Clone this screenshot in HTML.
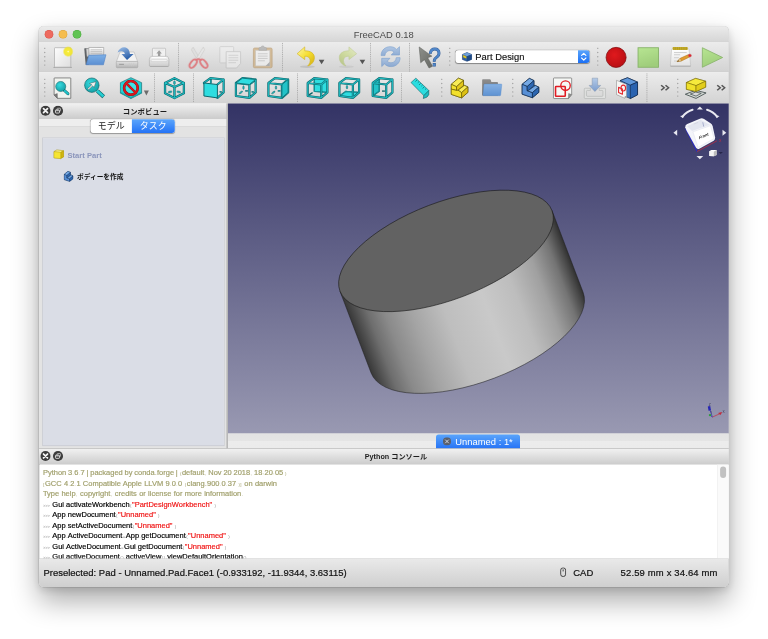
<!DOCTYPE html>
<html lang="ja"><head><meta charset="utf-8"><title>FreeCAD 0.18</title>
<style>
html,body{margin:0;padding:0;background:#fff;}
body{width:768px;height:639px;overflow:hidden;position:relative;font-family:"Liberation Sans","Noto Sans CJK JP",sans-serif;color:#222;}
#win{position:absolute;left:390px;top:265px;width:6895px;height:5605px;border-radius:45px;background:#e4e4e4;
 box-shadow:0 140px 280px rgba(0,0,0,.33),0 30px 80px rgba(0,0,0,.12),0 0 0 5px rgba(0,0,0,.17);}
#clip{position:absolute;left:0;top:0;width:100%;height:100%;border-radius:45px;overflow:hidden;}
.abs{position:absolute;}
#scaler{position:absolute;left:0;top:0;width:7680px;height:6390px;transform:scale(.1);transform-origin:0 0;will-change:transform;}
#zoomer{position:absolute;left:0;top:0;width:7680px;height:6390px;}
#ui{position:absolute;left:0;top:0;width:7680px;height:6390px;}
.ic{position:absolute;overflow:visible;}
#titlebar{left:390px;top:265px;width:6895px;height:155px;background:linear-gradient(#ebebeb,#d6d6d6);border-radius:45px 45px 0 0;border-bottom:5px solid #b4b4b4;box-sizing:border-box;}
#title{left:390px;top:285px;width:6895px;text-align:center;font-size:94px;color:#4a4a4a;line-height:120px;}
.tl{width:86px;height:86px;border-radius:50%;top:300px;}
.tbar{left:390px;width:6895px;background:linear-gradient(#ececec,#d3d3d3);box-sizing:border-box;}
.hsep{width:0;border-left:9px dotted #979797;}
.handle{width:10px;border-left:10px dotted #9a9a9a;}
.docktitle{background:linear-gradient(#f1f1f1,#cdcdcd);box-sizing:border-box;border-top:5px solid #b9b9b9;border-bottom:5px solid #a9a9a9;}
.dbtn{width:106px;height:106px;}
.con{font-size:75px;line-height:105px;white-space:nowrap;color:#000;-webkit-text-stroke:1.8px currentColor;word-spacing:2px}
.con div{height:105px;}
.con .c{color:#a1a06c;}
.con .s{color:#f01414;}
.con .p{font-size:44px;color:#8e8e8e;letter-spacing:4.5px;margin-left:4px;-webkit-text-stroke:0}
.con .pc{font-size:44px;color:#a1a06c;letter-spacing:4.5px;margin-left:4px;-webkit-text-stroke:0}
.con .pr{font-size:40px;color:#8e8e8e;letter-spacing:0;margin-right:24px;-webkit-text-stroke:0;word-spacing:0}

</style></head><body>
<div id="scaler"><div id="zoomer">
<div id="win"></div>
<div id="ui">
<!-- title bar -->
<div class="abs" id="titlebar"></div>
<div class="abs tl" style="left:447px;background:#ee6a5f;box-shadow:inset 0 0 0 5px #d5544a"></div>
<div class="abs tl" style="left:587px;background:#f5bd4f;box-shadow:inset 0 0 0 5px #d9a13b"></div>
<div class="abs tl" style="left:727px;background:#61c454;box-shadow:inset 0 0 0 5px #4da73f"></div>
<div class="abs" id="title">FreeCAD 0.18</div>

<!-- toolbar 1 -->
<div class="abs tbar" style="top:420px;height:298px;border-bottom:6px solid #b9b9b9"></div>
<div class="abs tbar" style="top:718px;height:314px;border-top:6px solid #f2f2f2"></div>
<svg class="abs" style="left:438px;top:475px;width:20px;height:190px" viewBox="0 0 2 19" fill="#9d9d9d"><circle cx="1" cy="0.8" r=".7"/><circle cx="1" cy="5.0" r=".7"/><circle cx="1" cy="9.2" r=".7"/><circle cx="1" cy="13.4" r=".7"/><circle cx="1" cy="17.6" r=".7"/></svg>
<div class="abs hsep" style="left:1780px;top:430px;height:285px"></div>
<div class="abs hsep" style="left:2820px;top:430px;height:285px"></div>
<div class="abs hsep" style="left:3700px;top:430px;height:285px"></div>
<div class="abs hsep" style="left:4090px;top:430px;height:285px"></div>
<svg class="abs" style="left:4488px;top:475px;width:20px;height:190px" viewBox="0 0 2 19" fill="#9d9d9d"><circle cx="1" cy="0.8" r=".7"/><circle cx="1" cy="5.0" r=".7"/><circle cx="1" cy="9.2" r=".7"/><circle cx="1" cy="13.4" r=".7"/><circle cx="1" cy="17.6" r=".7"/></svg>
<svg class="abs" style="left:5968px;top:475px;width:20px;height:190px" viewBox="0 0 2 19" fill="#9d9d9d"><circle cx="1" cy="0.8" r=".7"/><circle cx="1" cy="5.0" r=".7"/><circle cx="1" cy="9.2" r=".7"/><circle cx="1" cy="13.4" r=".7"/><circle cx="1" cy="17.6" r=".7"/></svg>
<svg class="ic" style="left:545px;top:476.5px;width:163px;height:194.5px" viewBox="3.4 2.2 16.6 19.6" preserveAspectRatio="none"><defs><linearGradient id="gnew" x1="0" y1="0" x2="1" y2="1"><stop offset="0" stop-color="#fdfdfd"/><stop offset="1" stop-color="#dedede"/></linearGradient>
<radialGradient id="gglow"><stop offset="0" stop-color="#fffbd0"/><stop offset=".22" stop-color="#f7ec3a"/><stop offset=".7" stop-color="#f1e52a" stop-opacity=".9"/><stop offset="1" stop-color="#f1e52a" stop-opacity="0"/></radialGradient></defs>
<path d="M2.4 22.1 H21" stroke="#8a8a8a" stroke-width=".9" opacity=".75"/>
<rect x="3.4" y="2.2" width="16.6" height="19.6" rx=".6" fill="url(#gnew)" stroke="#ababab" stroke-width=".7"/>
<circle cx="17.3" cy="6.1" r="5.6" fill="url(#gglow)"/></svg>
<svg class="ic" style="left:460px;top:420px;width:700px;height:320px" viewBox="0 0 768 351" preserveAspectRatio="xMidYMid meet"><defs><linearGradient id="gfold" x1="0" y1="0" x2="0" y2="1"><stop offset="0" stop-color="#7fb0e6"/><stop offset="1" stop-color="#5b8fd2"/></linearGradient>
<linearGradient id="gpap" x1="0" y1="0" x2="0" y2="1"><stop offset="0" stop-color="#ffffff"/><stop offset="1" stop-color="#c9c9c9"/></linearGradient></defs>
<path d="M420 75 Q420 68 428 68 L470 68 L470 250 L435 250 Z" fill="#5e6266"/>
<path d="M440 75 L600 62 L610 150 L450 160 Z" fill="#d6d6d6" stroke="#9a9a9a" stroke-width="5"/>
<path d="M470 60 H633 V150 H470 Z" fill="url(#gpap)" stroke="#8f8f8f" stroke-width="6"/>
<path d="M490 85 H615 M490 105 H615 M490 125 H615" stroke="#b3b3b3" stroke-width="7"/>
<path d="M470 146 L658 140 L630 250 L440 250 Z" fill="url(#gfold)" stroke="#4b7fc4" stroke-width="6" stroke-linejoin="round"/></svg>
<svg class="ic" style="left:1130px;top:430px;width:280px;height:280px" viewBox="0 0 639 639" preserveAspectRatio="xMidYMid meet"><defs><linearGradient id="gdrv" x1="0" y1="0" x2="0" y2="1"><stop offset="0" stop-color="#e2e2e2"/><stop offset="1" stop-color="#b2b2b2"/></linearGradient>
<linearGradient id="gsarr" x1="0" y1="0" x2=".6" y2="1"><stop offset="0" stop-color="#9fc0e8"/><stop offset="1" stop-color="#2258a4"/></linearGradient></defs>
<path d="M160 205 H480 L562 425 H78 Z" fill="#f2f2f2" stroke="#a9a9a9" stroke-width="11" stroke-linejoin="round"/>
<rect x="75" y="420" width="490" height="145" rx="22" fill="url(#gdrv)" stroke="#9c9c9c" stroke-width="11"/>
<path d="M140 487 H250" stroke="#9c9c9c" stroke-width="24"/><path d="M370 455 V530 M420 455 V530 M470 455 V530" stroke="#c9c9c9" stroke-width="14"/>
<path d="M105 215 C140 115 250 65 330 125 C368 155 382 200 385 250 L470 250 L320 388 L195 250 L270 250 C262 200 205 165 105 215 Z" fill="url(#gsarr)"/></svg>
<svg class="ic" style="left:1450px;top:430px;width:280px;height:280px" viewBox="0 0 639 639" preserveAspectRatio="xMidYMid meet"><defs><linearGradient id="gprn" x1="0" y1="0" x2="0" y2="1"><stop offset="0" stop-color="#f6f6f6"/><stop offset="1" stop-color="#cbcbcb"/></linearGradient></defs>
<rect x="170" y="120" width="300" height="205" rx="14" fill="#f1f1f1" stroke="#a9a9a9" stroke-width="12"/>
<path d="M215 160 H430" stroke="#d2d2d2" stroke-width="10"/>
<path d="M322 165 L385 240 H350 V295 H295 V240 H260 Z" fill="#9d9d9d"/>
<path d="M150 305 H495 Q520 305 530 330 L545 375 V510 Q545 535 520 535 H125 Q100 535 100 510 V375 L115 330 Q125 305 150 305 Z" fill="url(#gprn)" stroke="#a3a3a3" stroke-width="12" stroke-linejoin="round"/>
<path d="M170 330 H475" stroke="#ffffff" stroke-width="22" stroke-linecap="round" opacity=".9"/>
<rect x="140" y="385" width="365" height="38" rx="10" fill="#fbfbfb" stroke="#b5b5b5" stroke-width="8"/>
<path d="M112 540 H535" stroke="#9a9a9a" stroke-width="14" opacity=".8"/></svg>
<svg class="ic" style="left:1840px;top:430px;width:280px;height:280px" viewBox="0 0 639 639" preserveAspectRatio="xMidYMid meet"><g opacity=".8"><path d="M165 150 L210 95 L352 340 L300 372 Z" fill="#dedede" stroke="#aaa49e" stroke-width="7" stroke-linejoin="round"/>
<path d="M472 150 L440 95 L288 340 L340 372 Z" fill="#e6e6e6" stroke="#aaa49e" stroke-width="7" stroke-linejoin="round"/>
<ellipse cx="208" cy="470" rx="58" ry="112" transform="rotate(38 208 470)" fill="none" stroke="#de6268" stroke-width="42"/>
<ellipse cx="450" cy="470" rx="58" ry="112" transform="rotate(-38 450 470)" fill="none" stroke="#de6268" stroke-width="42"/>
<path d="M270 385 L330 365 L385 385" fill="none" stroke="#de6268" stroke-width="42" stroke-linecap="round" stroke-linejoin="round"/></g></svg>
<svg class="ic" style="left:2198px;top:466px;width:208px;height:214px" viewBox="3 2.5 18 19.0" preserveAspectRatio="none"><g opacity=".4"><rect x="3" y="2.5" width="12" height="14.500" rx=".6" fill="#f4f4f4" stroke="#a8a8a8" stroke-width=".7"/>
<path d="M8.500 7 H21 V17.5 L17.5 21.5 H8.5 Z" fill="#fafafa" stroke="#a0a0a0" stroke-width=".7" stroke-linejoin="round"/>
<path d="M10.5 10.2 H19 M10.5 12.4 H19 M10.5 14.6 H19 M10.5 16.800 H17" stroke="#b7b7b7" stroke-width=".8"/></g></svg>
<svg class="ic" style="left:2534px;top:459px;width:187px;height:219px" viewBox="3.2 1.6 17.6 20.599999999999998" preserveAspectRatio="none"><g opacity=".6"><rect x="3.2" y="3.6" width="17.6" height="18.6" rx="1.2" fill="#c9a36b" stroke="#a88049" stroke-width=".7"/>
<rect x="5.4" y="5.8" width="13.2" height="14.6" fill="#f5f5f5" stroke="#b9b9b9" stroke-width=".5"/>
<path d="M8.4 5.8 V4 Q8.4 3.2 9.4 3.2 H10.3 Q10.6 1.600 12 1.600 Q13.4 1.600 13.700 3.2 H14.600 Q15.600 3.2 15.600 4 V5.8 Z" fill="#9e9e9e" stroke="#7f7f7f" stroke-width=".5"/>
<path d="M7.400 9 H16.600 M7.400 11.2 H16.600 M7.400 13.4 H16.600 M7.400 15.600 H14" stroke="#b5b5b5" stroke-width=".8"/>
<path d="M18.600 16.5 L14.700 20.4 H18.600 Z" fill="#8e8e8e"/></g></svg>
<svg class="ic" style="left:2971px;top:469px;width:173px;height:191px" viewBox="1.8 1.6 17.3 19.099999999999998" preserveAspectRatio="none"><defs><linearGradient id="gundo" x1="0" y1="0" x2="1" y2="1"><stop offset="0" stop-color="#fdf7a8"/><stop offset=".5" stop-color="#f5de30"/><stop offset="1" stop-color="#d4ae12"/></linearGradient></defs>
<ellipse cx="12" cy="21.4" rx="7.5" ry="1.3" fill="#000" opacity=".1"/>
<path d="M1.8 8.4 L9.45 1.6 V5.6 C15.5 5.2 19.3 8.6 19.1 12.4 C19 16.5 16 19.8 12.4 20.7 C14.6 18.4 15.4 15.6 14.6 13.6 C13.8 11.6 12 10.9 9.45 10.9 V14.3 Z" fill="url(#gundo)" stroke="#d2b21e" stroke-width=".6" stroke-linejoin="round"/></svg>
<svg class="ic" style="left:3393px;top:469px;width:173px;height:191px" viewBox="4.9 1.6 17.299999999999997 19.099999999999998" preserveAspectRatio="none"><g opacity=".5"><defs><linearGradient id="gredo" x1="1" y1="0" x2="0" y2="1"><stop offset="0" stop-color="#e4f0a8"/><stop offset=".55" stop-color="#b9d25a"/><stop offset="1" stop-color="#93ad3a"/></linearGradient></defs>
<ellipse cx="12" cy="21.4" rx="7.5" ry="1.3" fill="#000" opacity=".12"/>
<path d="M22.2 8.4 L14.55 1.6 V5.6 C8.5 5.2 4.7 8.6 4.9 12.4 C5 16.5 8 19.8 11.6 20.7 C9.4 18.4 8.6 15.6 9.4 13.6 C10.2 11.6 12 10.9 14.55 10.9 V14.3 Z" fill="url(#gredo)" stroke="#9db54a" stroke-width=".6" stroke-linejoin="round"/></g></svg>
<svg class="ic" style="left:3188px;top:597px;width:56px;height:46px" viewBox="7 9 10 8" preserveAspectRatio="none"><path d="M7 9 H17 L12 17 Z" fill="#555"/></svg>
<svg class="ic" style="left:3596px;top:597px;width:56px;height:46px" viewBox="7 9 10 8" preserveAspectRatio="none"><path d="M7 9 H17 L12 17 Z" fill="#555"/></svg>
<svg class="ic" style="left:3811px;top:467px;width:190px;height:199px" viewBox="2.6 2.4 18.799999999999997 19.200000000000003" preserveAspectRatio="none"><g opacity=".72"><defs><linearGradient id="gref" x1="0" y1="0" x2="0" y2="1"><stop offset="0" stop-color="#9dbbe2"/><stop offset="1" stop-color="#6f98cf"/></linearGradient></defs>
<path d="M2.600 11 C2.600 5.500 7 2.400 11.500 2.400 C14.500 2.400 16.600 3.600 18 5 L20.800 2.400 V10.400 H12.600 L15.400 7.600 C14.400 6.600 13 6.100 11.500 6.100 C8.600 6.100 6.600 8.200 6.400 11 Z" fill="url(#gref)" stroke="#5486c6" stroke-width=".6" stroke-linejoin="round"/>
<path d="M21.400 13 C21.400 18.500 17 21.600 12.500 21.600 C9.500 21.600 7.400 20.400 6 19 L3.200 21.600 V13.600 H11.400 L8.600 16.400 C9.600 17.400 11 17.900 12.500 17.900 C15.400 17.900 17.400 15.800 17.600 13 Z" fill="url(#gref)" stroke="#5486c6" stroke-width=".6" stroke-linejoin="round"/></g></svg>
<svg class="ic" style="left:4150px;top:430px;width:280px;height:280px" viewBox="0 0 639 639" preserveAspectRatio="xMidYMid meet"><defs><linearGradient id="gcur" x1="0" y1="0" x2="1" y2="1"><stop offset="0" stop-color="#8e908b"/><stop offset="1" stop-color="#666864"/></linearGradient></defs>
<path d="M95 90 L385 300 L290 335 L400 530 L320 570 L215 380 L130 450 Z" fill="url(#gcur)" stroke="#555753" stroke-width="11" stroke-linejoin="round"/>
<text x="448" y="534" font-family="Liberation Sans, sans-serif" font-size="590" text-anchor="middle" fill="#4f86c9" stroke="#2f5a96" stroke-width="26" paint-order="stroke" textLength="280" lengthAdjust="spacingAndGlyphs">?</text></svg>
<svg class="ic" style="left:6057px;top:470px;width:208px;height:208px" viewBox="0.4 0.4 23.200000000000003 23.200000000000003" preserveAspectRatio="none"><defs><radialGradient id="grec" cx=".42" cy=".38" r=".7"><stop offset="0" stop-color="#e0191d"/><stop offset="1" stop-color="#b50d12"/></radialGradient></defs>
<circle cx="12" cy="12" r="11.200" fill="url(#grec)" stroke="#7c0a0d" stroke-width=".8"/></svg>
<svg class="ic" style="left:6376px;top:473px;width:213px;height:204px" viewBox="0.3 0.3 23.4 23.4" preserveAspectRatio="none"><defs><linearGradient id="ggrn" x1="0" y1="0" x2=".3" y2="1"><stop offset="0" stop-color="#b7e592"/><stop offset="1" stop-color="#9fcd7b"/></linearGradient></defs><rect x=".8" y=".8" width="22.400" height="22.400" fill="url(#ggrn)" stroke="#86b268" stroke-width="1"/></svg>
<svg class="ic" style="left:6670px;top:430px;width:280px;height:280px" viewBox="0 0 639 639" preserveAspectRatio="xMidYMid meet"><defs><linearGradient id="gmac" x1="0" y1="0" x2="0" y2="1"><stop offset="0" stop-color="#ffffff"/><stop offset="1" stop-color="#e2e2e2"/></linearGradient></defs>
<path d="M82 500 H535 Q548 500 546 520 Q545 548 525 548 H92 Q72 548 72 520 Q70 500 82 500 Z" fill="#b9b9b9"/>
<path d="M120 135 H485 Q500 135 502 150 L540 505 Q541 522 525 522 H92 Q75 522 77 505 L105 150 Q107 135 120 135 Z" fill="url(#gmac)" stroke="#b2b2b2" stroke-width="10"/>
<rect x="128" y="92" width="345" height="66" rx="14" fill="#c8b02c"/>
<path d="M158 96 V154 M200 96 V154 M242 96 V154 M284 96 V154 M326 96 V154 M368 96 V154 M410 96 V154 M448 96 V154" stroke="#9c8618" stroke-width="12"/>
<path d="M160 218 H450 M160 268 H300 M160 335 H270 M160 412 H235" stroke="#cdcdcd" stroke-width="22"/>
<path d="M232 425 L300 350 L492 262 L520 318 L330 410 Z" fill="#e8a233" stroke="#a16a18" stroke-width="10" stroke-linejoin="round"/>
<path d="M232 425 L300 350 L330 410 Z" fill="#e9cf9a" stroke="#a16a18" stroke-width="8" stroke-linejoin="round"/><path d="M232 425 L258 396 L270 418 Z" fill="#3a2a12"/>
<path d="M312 356 L500 270 M322 385 L512 295" stroke="#c98420" stroke-width="8"/>
<circle cx="522" cy="286" r="36" fill="#e0262e" stroke="#b8848a" stroke-width="8"/></svg>
<svg class="ic" style="left:7019px;top:473px;width:212px;height:204px" viewBox="0.5 0.3 23.3 23.4" preserveAspectRatio="none"><path d="M1 .8 L23.300 12 L1 23.200 Z" fill="url(#ggrn)" stroke="#86b268" stroke-width=".9" stroke-linejoin="round"/></svg>
<svg class="ic" style="left:480px;top:740px;width:280px;height:280px" viewBox="0 0 639 639" preserveAspectRatio="xMidYMid meet"><defs><radialGradient id="glens" cx=".4" cy=".35" r=".7"><stop offset="0" stop-color="#35dade"/><stop offset="1" stop-color="#149da3"/></radialGradient></defs>
<path d="M150 90 H510 Q520 90 520 100 V555 H215 L140 480 V100 Q140 90 150 90 Z" fill="#f1f3ef" stroke="#484848" stroke-width="14" stroke-linejoin="round"/>
<path d="M140 475 L212 445 L215 555 Z" fill="#7a7a7a" stroke="#484848" stroke-width="8" stroke-linejoin="round"/>
<path d="M375 375 L455 450" stroke="#0b5e62" stroke-width="66" stroke-linecap="round"/><path d="M375 375 L455 450" stroke="#22c4ca" stroke-width="44" stroke-linecap="round"/>
<circle cx="290" cy="285" r="115" fill="url(#glens)" stroke="#0b5e62" stroke-width="12"/></svg>
<svg class="ic" style="left:800px;top:740px;width:280px;height:280px" viewBox="0 0 639 639" preserveAspectRatio="xMidYMid meet"><path d="M395 385 L540 520" stroke="#0b5e62" stroke-width="88" stroke-linecap="butt"/><path d="M390 380 L535 515" stroke="#25cdd2" stroke-width="62" stroke-linecap="butt"/>
<circle cx="270" cy="255" r="165" fill="url(#glens)" stroke="#0b5e62" stroke-width="14"/>
<path d="M175 335 L270 245 L215 215 L365 175 L322 308 L292 268 L198 358 Z" fill="#f2f2f0" stroke="#3d3d3d" stroke-width="9" stroke-linejoin="round"/></svg>
<svg class="ic" style="left:1170px;top:740px;width:350px;height:280px" viewBox="0 0 768 614" preserveAspectRatio="xMidYMid meet"><path d="M305 80 L540 190 V420 L305 540 L75 420 V190 Z" fill="#27cfd4" stroke="#0b5e62" stroke-width="13" stroke-linejoin="round"/>
<path d="M305 540 L75 420 V390 L305 505 L540 390 V420 Z" fill="#169aa0" opacity=".7"/>
<circle cx="305" cy="305" r="128" fill="#3fe2e6"/>
<circle cx="305" cy="305" r="150" fill="none" stroke="#7d0c10" stroke-width="56"/>
<path d="M205 205 L405 405" stroke="#7d0c10" stroke-width="50"/>
<circle cx="305" cy="305" r="150" fill="none" stroke="#db181e" stroke-width="42"/>
<path d="M200 200 L410 410" stroke="#db181e" stroke-width="38"/>
<path d="M590 360 H700 L645 470 Z" fill="#6c6c6c"/></svg>
<svg class="ic" style="left:1600px;top:740px;width:280px;height:280px" viewBox="0 0 639 639" preserveAspectRatio="xMidYMid meet"><path d="M330 95 L545 205 M545 205 L545 440 M545 440 L330 550 M330 550 L115 440 M115 440 L115 205 M115 205 L330 95 M330 295 L330 550 M330 295 L115 205 M330 295 L545 205" stroke="#0b6368" stroke-width="52" stroke-linecap="round" fill="none"/><path d="M330 95 L545 205 M545 205 L545 440 M545 440 L330 550 M330 550 L115 440 M115 440 L115 205 M115 205 L330 95 M330 295 L330 550 M330 295 L115 205 M330 295 L545 205" stroke="#1fb6bc" stroke-width="28" stroke-linecap="round" fill="none"/><circle cx="135" cy="210" r="14" fill="#2fdde0"/><circle cx="525" cy="210" r="14" fill="#2fdde0"/><ellipse cx="330" cy="200" rx="22" ry="44" fill="#1fb6bc" stroke="#0b6368" stroke-width="10"/><ellipse cx="230" cy="410" rx="44" ry="20" transform="rotate(-12 230 410)" fill="#1fb6bc" stroke="#0b6368" stroke-width="10"/><ellipse cx="428" cy="410" rx="44" ry="20" transform="rotate(12 428 410)" fill="#1fb6bc" stroke="#0b6368" stroke-width="10"/></svg>
<svg class="ic" style="left:1990px;top:740px;width:280px;height:280px" viewBox="0 0 639 639" preserveAspectRatio="xMidYMid meet"><path d="M270 110 L270 200" stroke="#0b6368" stroke-width="40" stroke-linecap="round" fill="none"/><path d="M270 110 L270 200" stroke="#1fb6bc" stroke-width="20" stroke-linecap="round" fill="none"/><path d="M470 405 L520 412" stroke="#0b6368" stroke-width="34"/><path d="M474 406 L516 411" stroke="#1fb6bc" stroke-width="16"/><path d="M112 205 L262 95 M262 95 L562 125 M562 125 L562 420 M562 420 L420 545 M420 240 L562 125" stroke="#0b6368" stroke-width="50" stroke-linecap="round" fill="none"/><path d="M112 205 L262 95 M262 95 L562 125 M562 125 L562 420 M562 420 L420 545 M420 240 L562 125" stroke="#1fb6bc" stroke-width="26" stroke-linecap="round" fill="none"/><polygon points="112,205 420,240 420,545 112,502" fill="#2fdde0" stroke="#0b6368" stroke-width="22" stroke-linejoin="round"/></svg>
<svg class="ic" style="left:2310px;top:740px;width:280px;height:280px" viewBox="0 0 639 639" preserveAspectRatio="xMidYMid meet"><ellipse cx="285" cy="310" rx="17" ry="42" fill="#1fb6bc" stroke="#0b6368" stroke-width="10"/><ellipse cx="225" cy="422" rx="46" ry="17" transform="rotate(-35 225 422)" fill="#1fb6bc" stroke="#0b6368" stroke-width="10"/><path d="M325 385 H385" stroke="#0b6368" stroke-width="34"/><path d="M330 385 H380" stroke="#1fb6bc" stroke-width="16"/><path d="M470 405 L520 412" stroke="#0b6368" stroke-width="34"/><path d="M474 406 L516 411" stroke="#1fb6bc" stroke-width="16"/><path d="M112 205 L262 95 M262 95 L562 125 M562 125 L562 420 M562 420 L420 545 M420 240 L562 125 M112 205 L420 240 M420 240 L420 545 M420 545 L112 502 M112 502 L112 205" stroke="#0b6368" stroke-width="50" stroke-linecap="round" fill="none"/><path d="M112 205 L262 95 M262 95 L562 125 M562 125 L562 420 M562 420 L420 545 M420 240 L562 125 M112 205 L420 240 M420 240 L420 545 M420 545 L112 502 M112 502 L112 205" stroke="#1fb6bc" stroke-width="26" stroke-linecap="round" fill="none"/><polygon points="112,205 262,95 562,125 420,240" fill="#2fdde0" stroke="#0b6368" stroke-width="18" stroke-linejoin="round"/></svg>
<svg class="ic" style="left:2635px;top:740px;width:280px;height:280px" viewBox="0 0 639 639" preserveAspectRatio="xMidYMid meet"><ellipse cx="285" cy="310" rx="17" ry="42" fill="#1fb6bc" stroke="#0b6368" stroke-width="10"/><ellipse cx="225" cy="422" rx="46" ry="17" transform="rotate(-35 225 422)" fill="#1fb6bc" stroke="#0b6368" stroke-width="10"/><path d="M325 385 H385" stroke="#0b6368" stroke-width="34"/><path d="M330 385 H380" stroke="#1fb6bc" stroke-width="16"/><path d="M470 405 L520 412" stroke="#0b6368" stroke-width="34"/><path d="M474 406 L516 411" stroke="#1fb6bc" stroke-width="16"/><path d="M112 205 L262 95 M262 95 L562 125 M562 125 L562 420 M562 420 L420 545 M420 240 L562 125 M112 205 L420 240 M420 240 L420 545 M420 545 L112 502 M112 502 L112 205" stroke="#0b6368" stroke-width="50" stroke-linecap="round" fill="none"/><path d="M112 205 L262 95 M262 95 L562 125 M562 125 L562 420 M562 420 L420 545 M420 240 L562 125 M112 205 L420 240 M420 240 L420 545 M420 545 L112 502 M112 502 L112 205" stroke="#1fb6bc" stroke-width="26" stroke-linecap="round" fill="none"/><polygon points="420,240 562,125 562,420 420,545" fill="#22c3c8" stroke="#0b6368" stroke-width="18" stroke-linejoin="round"/></svg>
<svg class="ic" style="left:3027.5px;top:740px;width:280px;height:280px" viewBox="0 0 639 639" preserveAspectRatio="xMidYMid meet"><polygon points="262,95 562,125 562,420 262,395" fill="#2fdde0"/><path d="M262 95 L262 395 M262 395 L562 420" stroke="#0b6368" stroke-width="30" stroke-linecap="round" fill="none"/><path d="M262 95 L262 395 M262 395 L562 420" stroke="#1fb6bc" stroke-width="14" stroke-linecap="round" fill="none"/><path d="M150 470 L215 430" stroke="#0b6368" stroke-width="30" stroke-linecap="round"/><path d="M112 205 L262 95 M262 95 L562 125 M562 125 L562 420 M562 420 L420 545 M420 240 L562 125 M112 205 L420 240 M420 240 L420 545 M420 545 L112 502 M112 502 L112 205" stroke="#0b6368" stroke-width="50" stroke-linecap="round" fill="none"/><path d="M112 205 L262 95 M262 95 L562 125 M562 125 L562 420 M562 420 L420 545 M420 240 L562 125 M112 205 L420 240 M420 240 L420 545 M420 545 L112 502 M112 502 L112 205" stroke="#1fb6bc" stroke-width="26" stroke-linecap="round" fill="none"/></svg>
<svg class="ic" style="left:3345px;top:740px;width:280px;height:280px" viewBox="0 0 639 639" preserveAspectRatio="xMidYMid meet"><polygon points="112,502 420,545 562,420 262,395" fill="#2fdde0"/><path d="M262 395 L562 420 M262 395 L112 502" stroke="#0b6368" stroke-width="30" stroke-linecap="round" fill="none"/><path d="M262 395 L562 420 M262 395 L112 502" stroke="#1fb6bc" stroke-width="14" stroke-linecap="round" fill="none"/><ellipse cx="285" cy="300" rx="17" ry="42" fill="#1fb6bc" stroke="#0b6368" stroke-width="10"/><path d="M112 205 L262 95 M262 95 L562 125 M562 125 L562 420 M562 420 L420 545 M420 240 L562 125 M112 205 L420 240 M420 240 L420 545 M420 545 L112 502 M112 502 L112 205" stroke="#0b6368" stroke-width="50" stroke-linecap="round" fill="none"/><path d="M112 205 L262 95 M262 95 L562 125 M562 125 L562 420 M562 420 L420 545 M420 240 L562 125 M112 205 L420 240 M420 240 L420 545 M420 545 L112 502 M112 502 L112 205" stroke="#1fb6bc" stroke-width="26" stroke-linecap="round" fill="none"/></svg>
<svg class="ic" style="left:3677.5px;top:740px;width:280px;height:280px" viewBox="0 0 639 639" preserveAspectRatio="xMidYMid meet"><polygon points="112,205 262,95 262,395 112,502" fill="#22c3c8"/><path d="M262 95 L262 395 M262 395 L112 502" stroke="#0b6368" stroke-width="30" stroke-linecap="round" fill="none"/><path d="M262 95 L262 395 M262 395 L112 502" stroke="#1fb6bc" stroke-width="14" stroke-linecap="round" fill="none"/><path d="M325 390 H390" stroke="#0b6368" stroke-width="30"/><path d="M112 205 L262 95 M262 95 L562 125 M562 125 L562 420 M562 420 L420 545 M420 240 L562 125 M112 205 L420 240 M420 240 L420 545 M420 545 L112 502 M112 502 L112 205" stroke="#0b6368" stroke-width="50" stroke-linecap="round" fill="none"/><path d="M112 205 L262 95 M262 95 L562 125 M562 125 L562 420 M562 420 L420 545 M420 240 L562 125 M112 205 L420 240 M420 240 L420 545 M420 545 L112 502 M112 502 L112 205" stroke="#1fb6bc" stroke-width="26" stroke-linecap="round" fill="none"/></svg>
<svg class="ic" style="left:4060px;top:740px;width:280px;height:280px" viewBox="0 0 639 639" preserveAspectRatio="xMidYMid meet"><path d="M405 490 L520 375 V470 Q500 540 395 560 Z" fill="#1cbcc2" stroke="#0b5e62" stroke-width="13" stroke-linejoin="round"/>
<path d="M115 195 L225 95 L520 375 L405 490 Z" fill="#2bdde0" stroke="#0b5e62" stroke-width="13" stroke-linejoin="round"/>
<path d="M252 137 L214 171 M294 176 L269 199 M335 215 L297 250 M376 254 L351 277 M418 293 L379 328 M459 333 L434 355 " stroke="#0b5e62" stroke-width="15"/></svg>
<svg class="ic" style="left:4460px;top:740px;width:280px;height:280px" viewBox="0 0 639 639" preserveAspectRatio="xMidYMid meet"><g stroke="#4f4506" stroke-width="13" stroke-linejoin="round">
<polygon points="120,235 285,95 400,145 400,262 420,260 500,295 500,420 355,545 120,465" fill="#e9d21f"/>
<polygon points="120,235 285,95 400,145 240,290" fill="#f8ec55"/>
<polygon points="120,235 240,290 240,375 120,345" fill="#f2e02c"/>
<polygon points="240,290 400,145 400,262 275,370 240,375" fill="#e2c71a"/>
<polygon points="275,370 420,260 500,295 355,425" fill="#f8ec55"/>
<polygon points="355,425 500,295 500,420 355,545" fill="#dcc015"/>
<polygon points="120,345 240,375 275,370 355,425 355,545 120,465" fill="#f2e02c"/></g></svg>
<svg class="ic" style="left:4780px;top:740px;width:280px;height:280px" viewBox="0 0 639 639" preserveAspectRatio="xMidYMid meet"><defs><linearGradient id="ggrp" x1="0" y1="0" x2="0" y2="1"><stop offset="0" stop-color="#85b0e2"/><stop offset="1" stop-color="#5e92d2"/></linearGradient>
<linearGradient id="ggrb" x1="0" y1="0" x2="0" y2="1"><stop offset="0" stop-color="#8e8e8e"/><stop offset="1" stop-color="#6a6a6a"/></linearGradient></defs>
<path d="M95 135 Q95 120 110 120 H270 Q285 120 292 135 L305 185 H440 Q455 185 455 200 V490 H95 Z" fill="url(#ggrb)"/>
<path d="M150 230 H530 Q545 230 543 245 L518 480 Q516 496 500 496 H125 Q110 496 112 480 L135 245 Q137 230 150 230 Z" fill="url(#ggrp)" stroke="#5287cc" stroke-width="8"/></svg>
<svg class="ic" style="left:5160px;top:740px;width:280px;height:280px" viewBox="0 0 639 639" preserveAspectRatio="xMidYMid meet"><g stroke="#0f2747" stroke-width="15" stroke-linejoin="round">
<polygon points="140,235 305,100 410,150 410,265 440,262 520,300 520,420 375,540 140,460" fill="#4a86cf"/>
<polygon points="140,235 305,100 410,150 255,285" fill="#74a8e4"/>
<polygon points="140,235 255,285 255,380 375,425 375,540 140,460" fill="#578fd6"/>
<polygon points="255,285 410,150 410,265 290,372 255,380" fill="#2d67b2"/>
<polygon points="255,380 290,372 440,262 520,300 375,425" fill="#74a8e4"/>
<polygon points="375,425 520,300 520,420 375,540" fill="#2d67b2"/></g></svg>
<svg class="ic" style="left:5480px;top:740px;width:280px;height:280px" viewBox="0 0 639 639" preserveAspectRatio="xMidYMid meet"><path d="M140 90 H525 Q540 90 540 105 V470 L465 560 H140 Q125 560 125 545 V105 Q125 90 140 90 Z" fill="#f5f7f5" stroke="#5c5c5c" stroke-width="14" stroke-linejoin="round"/>
<path d="M540 470 L470 445 L465 560 Z" fill="#8d8d8d" stroke="#5c5c5c" stroke-width="8" stroke-linejoin="round"/>
<rect x="172" y="287" width="222" height="222" rx="14" fill="none" stroke="#e01c24" stroke-width="36"/>
<circle cx="400" cy="265" r="108" fill="none" stroke="#e01c24" stroke-width="30"/></svg>
<svg class="ic" style="left:5810px;top:740px;width:280px;height:280px" viewBox="0 0 639 639" preserveAspectRatio="xMidYMid meet"><defs><linearGradient id="gatt" x1="0" y1="0" x2="0" y2="1"><stop offset="0" stop-color="#b4cbe8"/><stop offset="1" stop-color="#7b9ccc"/></linearGradient></defs>
<path d="M215 325 H95 Q75 325 75 345 V540 Q75 560 95 560 H540 Q560 560 560 540 V345 Q560 325 540 325 H415 V375 H480 Q500 375 500 395 V490 Q500 510 480 510 H145 Q125 510 125 490 V395 Q125 375 145 375 H215 Z" fill="#dfe0df" stroke="#a9adab" stroke-width="12" stroke-linejoin="round"/>
<path d="M255 95 H380 V260 H450 L318 400 L185 260 H255 Z" fill="url(#gatt)" stroke="#8192ab" stroke-width="11" stroke-linejoin="round"/></svg>
<svg class="ic" style="left:6130px;top:740px;width:280px;height:280px" viewBox="0 0 639 639" preserveAspectRatio="xMidYMid meet"><g stroke="#0d2140" stroke-width="14" stroke-linejoin="round">
<polygon points="165,150 330,85 560,185 560,475 395,560 165,460" fill="#3e78c2"/>
<polygon points="165,150 330,85 560,185 395,255" fill="#5f97da"/>
<polygon points="395,255 560,185 560,475 395,560" fill="#2a63b0"/></g>
<path d="M80 145 L310 235 V510 L265 552 L80 470 Z" fill="#f5f5f3" stroke="#707070" stroke-width="10" stroke-linejoin="round"/>
<path d="M310 510 L270 505 L265 552 Z" fill="#8d8d8d"/>
<path d="M127 302 L215 340 V462 L127 422 Z" fill="none" stroke="#e3262c" stroke-width="24" stroke-linejoin="round"/>
<ellipse cx="235" cy="322" rx="52" ry="68" fill="none" stroke="#e3262c" stroke-width="24"/></svg>
<svg class="ic" style="left:6605px;top:847px;width:88px;height:61px" viewBox="4.5 6 14.0 12" preserveAspectRatio="none"><path d="M5.500 7 L10.500 12 L5.500 17 M12.500 7 L17.500 12 L12.500 17" fill="none" stroke="#555" stroke-width="2.400" stroke-linejoin="miter"/></svg>
<svg class="ic" style="left:6820px;top:740px;width:280px;height:280px" viewBox="0 0 639 639" preserveAspectRatio="xMidYMid meet"><path d="M75 462 L310 372 L550 432 L320 557 Z" fill="#d4d9d5" stroke="#3f4b4b" stroke-width="19" stroke-linejoin="round"/>
<path d="M190 458 L315 412 L440 442 L320 505 Z" fill="#dadada" stroke="#3f4b4b" stroke-width="17" stroke-linejoin="round"/>
<g stroke="#6b5e08" stroke-width="12" stroke-linejoin="round">
<polygon points="100,195 310,100 540,165 540,300 320,400 100,350" fill="#efe02a"/>
<polygon points="100,195 310,100 540,165 320,265" fill="#f6ea3c"/>
<polygon points="100,195 320,265 320,400 100,350" fill="#f0e12b"/>
<polygon points="320,265 540,165 540,300 320,400" fill="#e2cd1b"/></g></svg>
<svg class="ic" style="left:7166px;top:847px;width:88px;height:61px" viewBox="4.5 6 14.0 12" preserveAspectRatio="none"><path d="M5.500 7 L10.500 12 L5.500 17 M12.500 7 L17.500 12 L12.500 17" fill="none" stroke="#555" stroke-width="2.400" stroke-linejoin="miter"/></svg>
<!-- combobox -->
<div class="abs" style="left:4555px;top:503px;width:1340px;height:128px;border-radius:30px;background:#fff;box-shadow:0 5px 10px rgba(0,0,0,.35),0 0 0 5px rgba(0,0,0,.12)"></div>
<div class="abs" style="left:5780px;top:503px;width:115px;height:128px;border-radius:0 30px 30px 0;background:linear-gradient(#5aa4fb,#1a6ff5)"></div>
<svg class="abs" style="left:5780px;top:503px;width:115px;height:128px" viewBox="0 0 11.5 12.8"><path d="M3.6 5.1 L5.75 3 L7.9 5.1 M3.6 7.7 L5.75 9.8 L7.9 7.7" fill="none" stroke="#fff" stroke-width="1.1" stroke-linecap="round" stroke-linejoin="round"/></svg>
<svg class="abs" style="left:4615px;top:512px;width:110px;height:110px" viewBox="0 0 24 24"><path d="M2 7 L12 3 L22 7 L22 18 L12 22 L2 18 Z" fill="#2d5fa3" stroke="#17376a" stroke-width="1.200" stroke-linejoin="round"/>
<path d="M2 7 L12 11 L22 7 L12 3 Z" fill="#6f9fd8"/><path d="M12 11 V22 L22 18 V7 Z" fill="#1f4a86"/>
<path d="M3.500 8.500 L10.500 11.500 V16 L3.500 13 Z" fill="#e8cf2a" stroke="#8a7a10" stroke-width=".6"/></svg>
<div class="abs" style="left:4753px;top:510px;font-size:94px;line-height:120px;color:#111;-webkit-text-stroke:1.5px #111">Part Design</div>

<!-- toolbar 2 -->
<svg class="abs" style="left:438px;top:785px;width:20px;height:190px" viewBox="0 0 2 19" fill="#9d9d9d"><circle cx="1" cy="0.8" r=".7"/><circle cx="1" cy="5.0" r=".7"/><circle cx="1" cy="9.2" r=".7"/><circle cx="1" cy="13.4" r=".7"/><circle cx="1" cy="17.6" r=".7"/></svg>
<div class="abs hsep" style="left:1540px;top:735px;height:285px"></div>
<div class="abs hsep" style="left:1930px;top:735px;height:285px"></div>
<div class="abs hsep" style="left:2970px;top:735px;height:285px"></div>
<div class="abs hsep" style="left:4010px;top:735px;height:285px"></div>
<svg class="abs" style="left:4408px;top:785px;width:20px;height:190px" viewBox="0 0 2 19" fill="#9d9d9d"><circle cx="1" cy="0.8" r=".7"/><circle cx="1" cy="5.0" r=".7"/><circle cx="1" cy="9.2" r=".7"/><circle cx="1" cy="13.4" r=".7"/><circle cx="1" cy="17.6" r=".7"/></svg>
<svg class="abs" style="left:5118px;top:785px;width:20px;height:190px" viewBox="0 0 2 19" fill="#9d9d9d"><circle cx="1" cy="0.8" r=".7"/><circle cx="1" cy="5.0" r=".7"/><circle cx="1" cy="9.2" r=".7"/><circle cx="1" cy="13.4" r=".7"/><circle cx="1" cy="17.6" r=".7"/></svg>
<div class="abs hsep" style="left:6465px;top:735px;height:285px"></div>
<svg class="abs" style="left:6768px;top:785px;width:20px;height:190px" viewBox="0 0 2 19" fill="#9d9d9d"><circle cx="1" cy="0.8" r=".7"/><circle cx="1" cy="5.0" r=".7"/><circle cx="1" cy="9.2" r=".7"/><circle cx="1" cy="13.4" r=".7"/><circle cx="1" cy="17.6" r=".7"/></svg>


<!-- combo view dock -->
<div class="abs" style="left:390px;top:1030px;width:1885px;height:3460px;background:#e4e4e4"></div>
<div class="abs docktitle" style="left:390px;top:1034px;width:1885px;height:152px;border-top:0"></div>
<svg class="abs dbtn" style="left:401.5px;top:1053.5px" viewBox="0 0 20 20"><circle cx="10" cy="10" r="9.5" fill="#3c3c3c"/><path d="M6.300 6.300 L13.700 13.700 M13.700 6.300 L6.300 13.700" stroke="#f4f4f4" stroke-width="3.300" stroke-linecap="round"/></svg>
<svg class="abs dbtn" style="left:526.5px;top:1053.5px" viewBox="0 0 20 20"><circle cx="10" cy="10" r="9.5" fill="#3c3c3c"/><rect x="8.200" y="5.400" width="6.600" height="5.600" rx="1.200" fill="none" stroke="#bdbdbd" stroke-width="1.600"/><rect x="5.200" y="8.400" width="7.600" height="6" rx="1.200" fill="#3c3c3c" stroke="#e6e6e6" stroke-width="1.700"/><path d="M6.5 10 H11.500" stroke="#e6e6e6" stroke-width="1.500"/></svg>
<div class="abs" style="left:1050px;top:1062px;width:800px;text-align:center;font-size:74px;font-weight:bold;line-height:100px;color:#1e1e1e">コンボビュー</div>
<div class="abs" style="left:390px;top:1188px;width:1885px;height:75px;background:#eeeeee"></div>
<div class="abs" style="left:395px;top:1263px;width:1875px;height:3220px;background:#e3e3e3;border-top:5px solid #d2d2d2"></div>
<div class="abs" style="left:906px;top:1193px;width:842px;height:137px;border-radius:30px;background:#fff;box-shadow:0 5px 10px rgba(0,0,0,.3),0 0 0 5px rgba(0,0,0,.1)"></div>
<div class="abs" style="left:1319px;top:1193px;width:429px;height:137px;border-radius:0 30px 30px 0;background:linear-gradient(#5ba5fb,#2473f6)"></div>
<div class="abs" style="left:906px;top:1200px;width:413px;text-align:center;font-size:90px;line-height:120px;color:#222">モデル</div>
<div class="abs" style="left:1319px;top:1200px;width:429px;text-align:center;font-size:90px;line-height:120px;color:#fff">タスク</div>
<div class="abs" style="left:430px;top:1383px;width:1808px;height:3070px;background:#dadde6;box-shadow:0 0 0 8px #c9cbd2"></div>
<svg class="abs" style="left:530px;top:1483px;width:115px;height:115px" viewBox="0 0 24 24"><g stroke="#a8960f" stroke-width=".7" stroke-linejoin="round">
<path d="M2 7 L8 3.500 L22 5 V18 L16 21.500 L2 20 Z" fill="#e8cf22"/>
<path d="M2 7 L8 3.500 L22 5 L16 8.500 Z" fill="#fbf08a"/>
<path d="M16 8.500 L22 5 V18 L16 21.500 Z" fill="#d0b410"/>
<path d="M2 7 L16 8.500 V21.500 L2 20 Z" fill="#f6e532"/></g></svg>
<div class="abs" style="left:675px;top:1501px;font-size:76px;font-weight:bold;line-height:100px;color:#8b95bb">Start Part</div>
<svg class="abs" style="left:636px;top:1709px;width:100px;height:109px" viewBox="120 85 420 470"><g stroke="#0f2747" stroke-width="15" stroke-linejoin="round">
<polygon points="140,235 305,100 410,150 410,265 440,262 520,300 520,420 375,540 140,460" fill="#4a86cf"/>
<polygon points="140,235 305,100 410,150 255,285" fill="#74a8e4"/>
<polygon points="140,235 255,285 255,380 375,425 375,540 140,460" fill="#578fd6"/>
<polygon points="255,285 410,150 410,265 290,372 255,380" fill="#2d67b2"/>
<polygon points="255,380 290,372 440,262 520,300 375,425" fill="#74a8e4"/>
<polygon points="375,425 520,300 520,420 375,540" fill="#2d67b2"/></g></svg>
<div class="abs" style="left:770px;top:1721px;font-size:67px;font-weight:bold;line-height:100px;color:#111">ボディーを作成</div>

<!-- 3D view -->
<div class="abs" style="left:2264px;top:1034px;width:17px;height:3450px;background:#b8b8b8"></div>
<div class="abs" id="view" style="left:2280px;top:1035px;width:5007px;height:3300px;background:linear-gradient(#333365,#9999b2);overflow:hidden">
<svg class="abs" style="left:0;top:0;width:5007px;height:3300px" viewBox="228 103.5 500.7 330">
<defs><linearGradient id="gside" gradientUnits="userSpaceOnUse" x1="-113.4" y1="0" x2="113.4" y2="0">
<stop offset="0" stop-color="#383838"/><stop offset=".03" stop-color="#4c4c4c"/><stop offset=".08" stop-color="#6e6e6e"/><stop offset=".15" stop-color="#8a8a8a"/><stop offset=".26" stop-color="#a4a4a4"/><stop offset=".4" stop-color="#bebebe"/><stop offset=".58" stop-color="#c9c9c9"/><stop offset=".72" stop-color="#bdbdbd"/><stop offset=".84" stop-color="#a0a0a0"/><stop offset=".93" stop-color="#747474"/><stop offset=".98" stop-color="#454545"/><stop offset="1" stop-color="#303030"/></linearGradient></defs>
<g transform="translate(446.0 250.9) rotate(-20.83)">
<path d="M-113.4 0 V87.5 A113.4 48.6 0 0 0 113.4 87.5 V0 Z" fill="url(#gside)" stroke="#222" stroke-width=".5" stroke-linejoin="round"/>
<ellipse cx="0" cy="0" rx="113.4" ry="48.6" fill="#626262" stroke="#1c1c1c" stroke-width=".6"/>
</g><svg x="668" y="100" width="64" height="64" viewBox="0 0 639 639">
<g fill="#e9e9f1"><path d="M288 96 L348 96 L318 66 Z"/><path d="M284 560 L352 560 L318 592 Z"/><path d="M54 328 L92 298 L92 358 Z"/><path d="M582 328 L544 298 L544 358 Z"/>
<path d="M120 160 L160 152 L150 182 Z"/><path d="M515 160 L475 152 L485 182 Z"/></g>
<path d="M145 165 Q185 115 245 97" fill="none" stroke="#e9e9f1" stroke-width="20" stroke-linecap="round"/>
<path d="M490 165 Q450 115 390 97" fill="none" stroke="#e9e9f1" stroke-width="20" stroke-linecap="round"/>
<path d="M176 288 L290 515" stroke="#2424d8" stroke-width="9"/>
<path d="M290 515 L488 408" stroke="#c8283c" stroke-width="7"/>
<text x="522" y="420" font-family="Liberation Sans, sans-serif" font-size="36" text-anchor="middle" fill="#d02a3a">X</text>
<path d="M172 272 Q170 250 192 240 L318 186 Q340 178 360 190 L425 232 Q442 244 446 262 L470 372 Q474 394 456 406 L312 486 Q292 496 280 478 L182 300 Z" fill="#f4f5fa"/>
<path d="M192 262 L325 198 L418 248 L240 310 Z" fill="#e3e6f0"/>
<path d="M248 318 L424 256 L460 385 L300 474 Z" fill="#ffffff" stroke="#e1e4ec" stroke-width="6" stroke-linejoin="round"/>
<path d="M348 226 L356 262" stroke="#9aa3c6" stroke-width="8" stroke-linecap="round"/>
<path d="M258 240 L300 224" stroke="#c6c9d6" stroke-width="5"/>
<text x="0" y="0" transform="translate(360 372) rotate(-22) skewX(-12)" font-family="Liberation Sans, sans-serif" font-size="40" font-weight="bold" text-anchor="middle" fill="#2a2a2a">Front</text>
<g><path d="M412 512 L438 498 L486 500 L486 548 L458 562 L412 558 Z" fill="#dcdcdc"/><path d="M412 512 L458 516 L458 562 L412 558 Z" fill="#f4f4f4"/><path d="M412 512 L438 498 L486 500 L458 516 Z" fill="#ffffff"/><path d="M458 516 L486 500 L486 548 L458 562 Z" fill="#bdbdbd"/></g>
<path d="M505 518 L548 518 L526 538 Z" fill="#26264a"/>
</svg><svg x="680" y="380" width="60" height="60" viewBox="0 0 639 639">
<path d="M345 395 L308 285" stroke="#2a2ab8" stroke-width="7"/>
<path d="M296 282 L322 276 L330 322 L304 328 Z" fill="#2626b4"/>
<path d="M345 395 L440 352" stroke="#c42a3a" stroke-width="7"/>
<path d="M405 352 L448 340 L432 372 Z" fill="#c42a3a"/>
<path d="M345 395 L322 374" stroke="#2a2ab8" stroke-width="7"/>
<circle cx="320" cy="374" r="13" fill="#2c9e3c"/>
<text x="465" y="348" font-family="Liberation Sans, sans-serif" font-size="34" text-anchor="middle" fill="#33334d">X</text>
<text x="316" y="276" font-family="Liberation Sans, sans-serif" font-size="34" text-anchor="middle" fill="#33334d">Z</text>
<text x="332" y="360" font-family="Liberation Sans, sans-serif" font-size="30" text-anchor="middle" fill="#33334d">Y</text>
</svg>
</svg>
</div>
<!-- mdi tab bar -->
<div class="abs" style="left:2280px;top:4335px;width:5007px;height:150px;background:linear-gradient(#e3e3e3 0,#e5e5e5 48%,#ececec 52%,#ebebeb 100%)"></div>
<div class="abs" style="left:4360px;top:4344px;width:840px;height:140px;border-radius:25px 25px 0 0;background:linear-gradient(#5aa5fb,#2774f6)"></div>
<svg class="abs" style="left:4428px;top:4372px;width:84px;height:84px" viewBox="0 0 20 20"><circle cx="10" cy="10" r="9.6" fill="#5a5f6b"/><path d="M6.4 6.4 L13.6 13.6 M13.6 6.4 L6.4 13.6" stroke="#d9dde6" stroke-width="2.2" stroke-linecap="round"/></svg>
<div class="abs" style="left:4553px;top:4356px;font-size:94px;line-height:120px;color:#fff">Unnamed : 1*</div>

<!-- python console -->
<div class="abs docktitle" style="left:390px;top:4482px;width:6897px;height:163px;border-top:6px solid #b4b4b4"></div>
<svg class="abs dbtn" style="left:401.5px;top:4506.5px" viewBox="0 0 20 20"><circle cx="10" cy="10" r="9.5" fill="#3c3c3c"/><path d="M6.300 6.300 L13.700 13.700 M13.700 6.300 L6.300 13.700" stroke="#f4f4f4" stroke-width="3.300" stroke-linecap="round"/></svg>
<svg class="abs dbtn" style="left:526.5px;top:4506.5px" viewBox="0 0 20 20"><circle cx="10" cy="10" r="9.5" fill="#3c3c3c"/><rect x="8.200" y="5.400" width="6.600" height="5.600" rx="1.200" fill="none" stroke="#bdbdbd" stroke-width="1.600"/><rect x="5.200" y="8.400" width="7.600" height="6" rx="1.200" fill="#3c3c3c" stroke="#e6e6e6" stroke-width="1.700"/><path d="M6.5 10 H11.500" stroke="#e6e6e6" stroke-width="1.500"/></svg>
<div class="abs" style="left:3460px;top:4516px;width:1000px;text-align:center;font-size:72px;font-weight:bold;line-height:100px;color:#1e1e1e">Python コンソール</div>
<div class="abs" style="left:400px;top:4645px;width:6887px;height:940px;background:#fff;overflow:hidden">
<div class="abs" style="right:0;top:0;width:110px;height:100%;background:#fafafa;border-left:5px solid #e9e9e9"></div>
<div class="abs" style="right:26px;top:20px;width:60px;height:115px;border-radius:30px;background:#c1c1c1"></div>
<div class="abs con" style="left:29px;top:28px">
<div class="c" style="word-spacing:-3px">Python 3<span class="pc">.</span>6<span class="pc">.</span>7 | packaged by conda<span class="pc">-</span>forge | <span class="pc">(</span>default<span class="pc">,</span> Nov 20 2018<span class="pc">,</span> 18<span class="pc">:</span>20<span class="pc">:</span>05<span class="pc"> )</span></div>
<div class="c"><span class="pc">[</span>GCC 4<span class="pc">.</span>2<span class="pc">.</span>1 Compatible Apple LLVM 9<span class="pc">.</span>0<span class="pc">.</span>0 <span class="pc">(</span>clang<span class="pc">-</span>900<span class="pc">.</span>0<span class="pc">.</span>37<span class="pc"> )]</span> on darwin</div>
<div class="c">Type help<span class="pc">,</span> copyright<span class="pc">,</span> credits or license for more information<span class="pc">.</span></div>
<div><span class="pr">&gt;&gt;&gt;</span>Gui<span class="p">.</span>activateWorkbench<span class="p">(</span><span class="s">"PartDesignWorkbench"</span><span class="p"> )</span></div>
<div><span class="pr">&gt;&gt;&gt;</span>App<span class="p">.</span>newDocument<span class="p">(</span><span class="s">"Unnamed"</span><span class="p"> )</span></div>
<div><span class="pr">&gt;&gt;&gt;</span>App<span class="p">.</span>setActiveDocument<span class="p">(</span><span class="s">"Unnamed"</span><span class="p"> )</span></div>
<div><span class="pr">&gt;&gt;&gt;</span>App<span class="p">.</span>ActiveDocument<span class="p">=</span>App<span class="p">.</span>getDocument<span class="p">(</span><span class="s">"Unnamed"</span><span class="p"> )</span></div>
<div><span class="pr">&gt;&gt;&gt;</span>Gui<span class="p">.</span>ActiveDocument<span class="p">=</span>Gui<span class="p">.</span>getDocument<span class="p">(</span><span class="s">"Unnamed"</span><span class="p"> )</span></div>
<div><span class="pr">&gt;&gt;&gt;</span>Gui<span class="p">.</span>activeDocument<span class="p">().</span>activeView<span class="p">().</span>viewDefaultOrientation<span class="p">()</span></div>
</div>
</div>

<!-- status bar -->
<div class="abs" style="left:390px;top:5585px;width:6895px;height:285px;border-radius:0 0 45px 45px;background:linear-gradient(#e9e9e9,#cfcfcf);border-top:5px solid #b3b3b3;box-sizing:border-box"></div>
<div class="abs" style="left:434px;top:5666px;font-size:95px;line-height:120px;color:#111;-webkit-text-stroke:2px #111;white-space:nowrap">Preselected: Pad - Unnamed.Pad.Face1 (-0.933192, -11.9344, 3.63115)</div>
<svg class="abs" style="left:5601px;top:5673px;width:61px;height:98px" viewBox="0 0 5.4 8.6"><rect x=".5" y=".5" width="4.4" height="7.6" rx="2" fill="none" stroke="#333" stroke-width=".8"/><line x1="2.7" y1="1.8" x2="2.7" y2="3.6" stroke="#333" stroke-width=".8"/></svg>
<div class="abs" style="left:5732px;top:5666px;font-size:95px;line-height:120px;color:#111;-webkit-text-stroke:2px #111">CAD</div>
<div class="abs" style="left:6206px;top:5666px;font-size:95px;line-height:120px;color:#111;-webkit-text-stroke:2px #111;white-space:nowrap;letter-spacing:1.3px">52.59 mm x 34.64 mm</div>
</div>
</div></div>
</body></html>
